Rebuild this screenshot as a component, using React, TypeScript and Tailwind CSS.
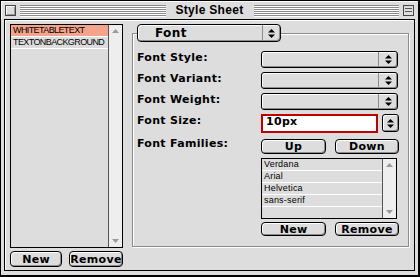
import React from "react";

const ui = { fontFamily: '"DejaVu Sans", sans-serif' };
const title = { fontFamily: '"Liberation Sans", Arial, sans-serif' };
const small = { fontFamily: '"Liberation Sans", Arial, sans-serif' };

function Stripes() {
  return (
    <div className="flex-1 h-[11px] flex flex-col justify-between">
      {[0, 1, 2, 3, 4, 5].map((i) => (
        <div key={i} className="h-px bg-[#8a8a8a] shadow-[0_1px_0_#ffffff]" />
      ))}
    </div>
  );
}

function Arrows() {
  return (
    <svg width="7" height="9" viewBox="0 0 7 9">
      <path d="M3.5 0 L7 3.5 H0 Z" fill="#000" />
      <path d="M0 5.5 H7 L3.5 9 Z" fill="#000" />
    </svg>
  );
}

function Button({ label, className = "" }: { label: string; className?: string }) {
  return (
    <div
      className={`border border-black rounded-[4px] bg-[#dddddd] shadow-[inset_1px_1px_0_#ffffff,inset_-1px_-1px_0_#8c8c8c] flex items-center justify-center text-[11px] font-bold leading-none tracking-[0.3px] ${className}`}
      style={ui}
    >
      {label}
    </div>
  );
}

function Popup() {
  return (
    <div className="w-[137px] h-[17px] border border-black rounded-[3px] bg-[#dddddd] shadow-[inset_1px_1px_0_#ffffff,inset_-1px_-1px_0_#8c8c8c] flex">
      <div className="flex-1" />
      <div className="w-[19px] border-l border-[#8c8c8c] flex items-center justify-center">
        <Arrows />
      </div>
    </div>
  );
}

function ScrollBar() {
  return (
    <div className="w-[14px] border-l border-[#555] bg-[#eeeeee] flex flex-col justify-between items-center py-[4px]">
      <svg width="7" height="4" viewBox="0 0 7 4">
        <path d="M3.5 0 L7 4 H0 Z" fill="#9a9a9a" />
      </svg>
      <svg width="7" height="4" viewBox="0 0 7 4">
        <path d="M0 0 H7 L3.5 4 Z" fill="#9a9a9a" />
      </svg>
    </div>
  );
}

function Row({ text, active = false, tight = false }: { text: string; active?: boolean; tight?: boolean }) {
  return (
    <div
      className={`h-[12px] border-b border-white pl-[2px] text-[9px] leading-[11px] ${active ? "bg-[#f5a48c]" : ""} ${tight ? "tracking-[-0.6px]" : "tracking-[0.2px]"}`}
      style={small}
    >
      {text}
    </div>
  );
}

function Label({ text, h }: { text: string; h: string }) {
  return (
    <div className={`${h} flex items-center pb-[3px] text-[11px] font-bold tracking-[0.3px]`} style={ui}>
      {text}
    </div>
  );
}

export default function App() {
  return (
    <div className="w-[420px] h-[277px] bg-[#dddddd] border border-black border-r-2 border-b-2 flex flex-col text-black">
      {/* Title bar */}
      <div className="h-[18px] flex items-center px-[4px] gap-[4px] shadow-[inset_1px_1px_0_#ffffff]">
        <div className="w-[11px] h-[11px] border border-[#444] bg-[#dddddd] shadow-[inset_1px_1px_0_#ffffff,inset_-1px_-1px_0_#999]" />
        <Stripes />
        <div className="px-[6px] text-[12px] font-bold leading-none tracking-[0.3px]" style={title}>
          Style Sheet
        </div>
        <Stripes />
        <div className="w-[11px] h-[11px] border border-[#444] bg-[#dddddd] flex flex-col justify-center gap-[2px] px-px">
          <div className="h-px bg-[#555]" />
          <div className="h-px bg-[#555]" />
        </div>
      </div>

      {/* Content */}
      <div className="mx-[3px] h-[252px] border border-black bg-[#dddddd] flex px-[5px] pt-[4px] gap-[9px] shadow-[inset_1px_1px_0_#ffffff]">
        {/* Left column */}
        <div className="w-[113px] flex flex-col">
          <div className="h-[224px] border border-black bg-[#dddddd] flex">
            <div className="flex-1">
              <Row text="WHITETABLETEXT" active tight />
              <Row text="TEXTONBACKGROUND" tight />
            </div>
            <ScrollBar />
          </div>
          <div className="flex justify-between mt-[3px]">
            <Button label="New" className="w-[52px] h-[16px]" />
            <Button label="Remove" className="w-[54px] h-[16px]" />
          </div>
        </div>

        {/* Right column */}
        <div className="w-[277px] flex flex-col">
          <div className="ml-[5px] w-[144px] h-[18px] border border-black rounded-[4px] bg-[#dddddd] shadow-[inset_1px_1px_0_#ffffff,inset_-1px_-1px_0_#8c8c8c] flex relative z-10">
            <div className="flex-1 flex items-center pl-[17px] text-[12px] font-bold tracking-[0.4px]" style={ui}>
              Font
            </div>
            <div className="w-[18px] border-l border-[#8c8c8c] flex items-center justify-center">
              <Arrows />
            </div>
          </div>
          <div className="-mt-[9px] h-[214px] border border-[#8c8c8c] shadow-[1px_1px_0_#ffffff,inset_1px_1px_0_#ffffff] pl-[4px] pt-[15px] flex">
            <div className="w-[124px] flex flex-col">
              <Label text="Font Style:" h="h-[21px]" />
              <Label text="Font Variant:" h="h-[21px]" />
              <Label text="Font Weight:" h="h-[21px]" />
              <Label text="Font Size:" h="h-[22px]" />
              <Label text="Font Families:" h="h-[24px]" />
            </div>
            <div className="w-[138px] flex flex-col">
              <div className="h-[21px] flex items-center"><Popup /></div>
              <div className="h-[21px] flex items-center"><Popup /></div>
              <div className="h-[21px] flex items-center"><Popup /></div>
              <div className="h-[22px] flex items-center gap-[4px]">
                <div className="w-[117px] h-[19px] border-2 border-[#c00000] bg-white flex items-center pl-[3px] text-[11px] font-bold tracking-[0.3px]" style={ui}>
                  <span className="-mt-px">10px</span>
                </div>
                <div className="w-[17px] h-[18px] border border-black rounded-[3px] bg-[#dddddd] shadow-[inset_1px_1px_0_#ffffff,inset_-1px_-1px_0_#8c8c8c] flex items-center justify-center">
                  <Arrows />
                </div>
              </div>
              <div className="h-[24px] flex items-center justify-between">
                <Button label="Up" className="w-[65px] h-[15px]" />
                <Button label="Down" className="w-[64px] h-[15px]" />
              </div>
              <div className="h-[61px] mr-[2px] border border-black bg-[#dddddd] flex">
                <div className="flex-1">
                  <Row text="Verdana" />
                  <Row text="Arial" />
                  <Row text="Helvetica" />
                  <Row text="sans-serif" />
                </div>
                <ScrollBar />
              </div>
              <div className="mt-[3px] flex justify-between">
                <Button label="New" className="w-[65px] h-[14px]" />
                <Button label="Remove" className="w-[64px] h-[14px]" />
              </div>
            </div>
          </div>
        </div>
      </div>
    </div>
  );
}
